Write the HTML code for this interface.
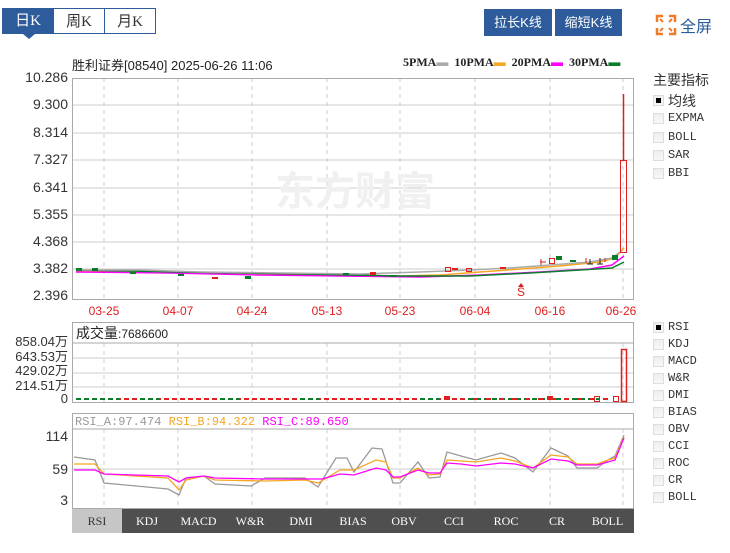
<!DOCTYPE html>
<html><head><meta charset="utf-8"><style>
body{margin:0;width:730px;height:553px;background:#fff;font-family:"Liberation Sans","Noto Sans CJK SC",sans-serif;overflow:hidden;position:relative}
.a{position:absolute;white-space:nowrap}
.tab{position:absolute;top:8px;height:26px;line-height:26px;text-align:center;font-size:15px;color:#333;font-family:"Liberation Serif","Noto Sans CJK SC",serif;box-sizing:border-box}
.btn{position:absolute;top:9px;height:27px;line-height:27px;background:#2d5b9b;color:#fff;font-size:13px;text-align:center}
.cb{position:absolute;left:653px;width:11px;height:11px;background:linear-gradient(#eee,#f8f8f8);border:1px solid #ddd;box-sizing:border-box}
.cl{position:absolute;left:668px;font-size:12px;color:#333;font-family:"Liberation Mono","Noto Sans CJK SC",monospace}
.yl{position:absolute;right:662px;font-size:14px;color:#333;text-align:right}
.bt{position:absolute;top:509px;height:24px;line-height:24px;font-size:12px;color:#fff;text-align:center;font-family:"Liberation Serif",serif}
</style></head><body>
<div class="tab" style="left:2px;width:52px;background:#2d5b9b;color:#fff">日K</div>
<div class="tab" style="left:54px;width:51px;border:1px solid #2d5b9b;border-left:none">周K</div>
<div class="tab" style="left:104px;width:52px;border:1px solid #2d5b9b">月K</div>
<div class="a" style="left:23px;top:34px;width:0;height:0;border-left:6px solid transparent;border-right:6px solid transparent;border-top:5px solid #2d5b9b"></div>
<div class="btn" style="left:484px;width:68px">拉长K线</div>
<div class="btn" style="left:555px;width:67px">缩短K线</div>
<svg class="a" style="left:655px;top:14px" width="22" height="22" viewBox="0 0 22 22" fill="none" stroke="#f07a2a" stroke-width="2.5"><path d="M2 8V2h6M20 8V2h-6M2 14v6h6M20 14v6h-6"/><path d="M5 5l3 3M17 5l-3 3M5 17l3-3M17 17l-3-3" stroke-width="2"/></svg>
<div class="a" style="left:680px;top:13px;font-size:16px;color:#2d5b9b">全屏</div>
<div class="a" style="left:72px;top:55px;font-size:13px;color:#222">胜利证券[08540] 2025-06-26 11:06</div>
<div class="a" style="left:403px;top:55px;font-size:12px;color:#222;font-weight:bold;font-family:'Liberation Serif',serif">5PMA<span style="color:#aaa">▬</span>&nbsp; 10PMA<span style="color:#f5a623">▬</span>&nbsp; 20PMA<span style="color:#f0f">▬</span>&nbsp; 30PMA<span style="color:#0a7d2c">▬</span></div>

<div class="yl" style="top:69px">10.286</div><div class="yl" style="top:96px">9.300</div><div class="yl" style="top:124px">8.314</div><div class="yl" style="top:151px">7.327</div><div class="yl" style="top:179px">6.341</div><div class="yl" style="top:206px">5.355</div><div class="yl" style="top:233px">4.368</div><div class="yl" style="top:260px">3.382</div><div class="yl" style="top:287px">2.396</div>
<div class="yl" style="top:331px;font-size:13px">858.04万</div><div class="yl" style="top:346px;font-size:13px">643.53万</div><div class="yl" style="top:360px;font-size:13px">429.02万</div><div class="yl" style="top:375px;font-size:13px">214.51万</div><div class="yl" style="top:391px;font-size:13px">0</div>
<div class="yl" style="top:428px">114</div><div class="yl" style="top:461px">59</div><div class="yl" style="top:492px">3</div>

<svg class="a" style="left:0;top:0" width="640" height="553">
<g stroke="#ccc" fill="none">
<path d="M72 105H634M72 133H634M72 160H634M72 188H634M72 215H634M72 242H634M72 269H634"/>
<path d="M104 78V300M178 78V300M252 78V300M327 78V300M400 78V300M475 78V300M550 78V300M623 78V300M104 343V402M178 343V402M252 343V402M327 343V402M400 343V402M475 343V402M550 343V402M623 343V402M104 429V508M178 429V508M252 429V508M327 429V508M400 429V508M475 429V508M550 429V508M623 429V508" stroke-dasharray="4,4"/>
<path d="M72 358H634M72 373H634M72 387H634M72 469H634"/>
</g>
<rect x="72.5" y="78.5" width="561" height="221" fill="none" stroke="#aaa"/>
<rect x="72.5" y="322.5" width="561" height="80" fill="none" stroke="#aaa"/>
<path d="M72 343H634" stroke="#aaa"/>
<rect x="72.5" y="413.5" width="561" height="95" fill="none" stroke="#aaa"/>
<path d="M72 429H634" stroke="#aaa"/>
<text x="275" y="205" font-size="40" font-weight="bold" fill="#f0f0f0" font-family="Noto Sans CJK SC,sans-serif">东方财富</text>
<g font-size="12" fill="#e02020" text-anchor="middle"><text x="104" y="315">03-25</text><text x="178" y="315">04-07</text><text x="252" y="315">04-24</text><text x="327" y="315">05-13</text><text x="400" y="315">05-23</text><text x="475" y="315">06-04</text><text x="550" y="315">06-16</text><text x="621" y="315">06-26</text></g>
<text x="521" y="296" font-size="12" fill="#e02020" text-anchor="middle">S</text><path d="M521 283l-3 4h6z" fill="#e02020"/>
<g fill="none" stroke-width="1.5">
<path d="M76 271L160 271L230 273L330 275L400 276L440 275L480 272L520 269L560 266L600 262L615 258L624 248" stroke="#f5a623"/>
<path d="M76 272L170 273L260 275L340 276L420 277L480 275L540 272L590 269L612 265L624 256" stroke="#f0f"/>
<path d="M76 270L180 272L300 274L400 276L470 276L530 273L580 270L612 268L624 262" stroke="#0a7d2c"/>
<path d="M76 270L140 270L200 272L280 273L360 274L420 272L470 270L510 268L550 265L590 262L612 258L620 252" stroke="#aaa"/>
</g>
<g fill="#0a7d2c"><rect x="76" y="268" width="6" height="3"/><rect x="92" y="268" width="6" height="3"/><rect x="130" y="272" width="6" height="2"/><rect x="178" y="274" width="6" height="2"/><rect x="245" y="276" width="6" height="3"/><rect x="343" y="273" width="6" height="2"/><rect x="390" y="275" width="6" height="2"/><rect x="556" y="256" width="6" height="4"/><rect x="570" y="260" width="6" height="2"/><rect x="612" y="255" width="6" height="5"/></g>
<g fill="#e02020"><rect x="370" y="272" width="6" height="3"/><rect x="212" y="277" width="6" height="2"/><rect x="452" y="268" width="6" height="2"/><rect x="500" y="267" width="6" height="2"/></g>
<g fill="none" stroke="#e02020"><rect x="445.5" y="267.5" width="5" height="4"/><rect x="466.5" y="268.5" width="5" height="3"/><rect x="549.5" y="258.5" width="5" height="5"/><rect x="620.5" y="160.5" width="6" height="92"/><path d="M541 259v6M605 258v4M586 258v5M540 262h6"/></g>
<path d="M623.5 94V160" stroke="#e02020" stroke-width="1.5"/>
<path d="M590 264v-5M587 264h6M600 264v-6M597 264h6" stroke="#222"/>
<g>
<path d="M76 399H460" stroke="#e02020" stroke-width="2" stroke-dasharray="5,3"/>
<path d="M76 399H120M140 399H160M220 399H240M300 399H320M420 399H440M460 399H600" stroke="#0a7d2c" stroke-width="2" stroke-dasharray="5,3"/>
<path d="M460 399H612" stroke="#e02020" stroke-width="2" stroke-dasharray="5,8"/>
<rect x="444" y="396" width="6" height="4" fill="#e02020"/><rect x="547" y="396" width="6" height="4" fill="#e02020"/>
<rect x="594.5" y="396.5" width="5" height="5" fill="none" stroke="#e02020"/><rect x="613.5" y="396.5" width="5" height="5" fill="none" stroke="#e02020"/>
<rect x="621.5" y="349.5" width="5" height="52" fill="none" stroke="#e02020" stroke-width="1.5"/>
</g>
<text x="76" y="338" font-size="14" fill="#222">成交量<tspan font-size="12">:7686600</tspan></text>
<text x="75" y="425" font-size="12" font-family="Liberation Mono,monospace"><tspan fill="#999">RSI_A:97.474 </tspan><tspan fill="#f5a623">RSI_B:94.322 </tspan><tspan fill="#f0f">RSI_C:89.650</tspan></text>
<g fill="none" stroke-width="1.3">
<polyline stroke="#999" points="74,457 95,460 104,483 168,489 179,495 186,478 204,476 215,484 251,486 265,478 305,478 318,487 336,458 347,458 354,472 372,448 382,449 393,483 400,483 418,462 429,478 440,477 447,452 461,456 476,460 501,453 515,458 533,472 551,448 568,456 577,468 597,468 608,460 615,456 624,435"/>
<polyline stroke="#f5a623" points="74,464 95,464 104,474 168,478 179,490 186,480 204,476 215,480 265,481 305,480 318,483 340,470 354,470 376,460 386,462 393,478 400,478 418,468 429,475 440,474 447,460 461,461 476,462 501,458 515,461 533,468 551,455 568,457 577,464 597,464 608,460 615,458 624,437"/>
<polyline stroke="#f0f" points="74,470 95,470 104,474 168,476 179,482 186,478 204,476 215,478 265,479 322,479 340,474 354,475 376,468 386,470 393,477 400,477 418,470 429,473 440,473 447,463 461,464 476,466 501,463 515,464 533,468 551,459 568,461 577,465 597,465 608,462 615,460 624,438"/>
</g>
</svg>
<div class="a" style="left:72px;top:509px;width:562px;height:24px;background:#4f4f4f"></div>
<div class="bt" style="left:72px;width:50px;background:#c6c6c6;color:#333">RSI</div>
<div class="bt" style="left:122px;width:50px">KDJ</div><div class="bt" style="left:172px;width:53px">MACD</div><div class="bt" style="left:225px;width:50px">W&amp;R</div><div class="bt" style="left:275px;width:52px">DMI</div><div class="bt" style="left:327px;width:52px">BIAS</div><div class="bt" style="left:379px;width:50px">OBV</div><div class="bt" style="left:429px;width:50px">CCI</div><div class="bt" style="left:479px;width:54px">ROC</div><div class="bt" style="left:533px;width:48px">CR</div><div class="bt" style="left:581px;width:53px">BOLL</div>

<div class="a" style="left:653px;top:70px;font-size:14px;color:#333">主要指标</div>
<div class="cb" style="top:95px"><div style="margin:2px;width:5px;height:5px;background:#000"></div></div><div class="cl" style="top:91px;font-size:14px">均线</div>
<div class="cb" style="top:113px"></div><div class="cl" style="top:111px">EXPMA</div>
<div class="cb" style="top:132px"></div><div class="cl" style="top:130px">BOLL</div>
<div class="cb" style="top:150px"></div><div class="cl" style="top:148px">SAR</div>
<div class="cb" style="top:168px"></div><div class="cl" style="top:166px">BBI</div>

<div class="cb" style="top:322px"><div style="margin:2px;width:5px;height:5px;background:#000"></div></div><div class="cl" style="top:320px">RSI</div>
<div class="cb" style="top:339px"></div><div class="cl" style="top:337px">KDJ</div>
<div class="cb" style="top:356px"></div><div class="cl" style="top:354px">MACD</div>
<div class="cb" style="top:373px"></div><div class="cl" style="top:371px">W&amp;R</div>
<div class="cb" style="top:390px"></div><div class="cl" style="top:388px">DMI</div>
<div class="cb" style="top:407px"></div><div class="cl" style="top:405px">BIAS</div>
<div class="cb" style="top:424px"></div><div class="cl" style="top:422px">OBV</div>
<div class="cb" style="top:441px"></div><div class="cl" style="top:439px">CCI</div>
<div class="cb" style="top:458px"></div><div class="cl" style="top:456px">ROC</div>
<div class="cb" style="top:475px"></div><div class="cl" style="top:473px">CR</div>
<div class="cb" style="top:492px"></div><div class="cl" style="top:490px">BOLL</div>
</body></html>
